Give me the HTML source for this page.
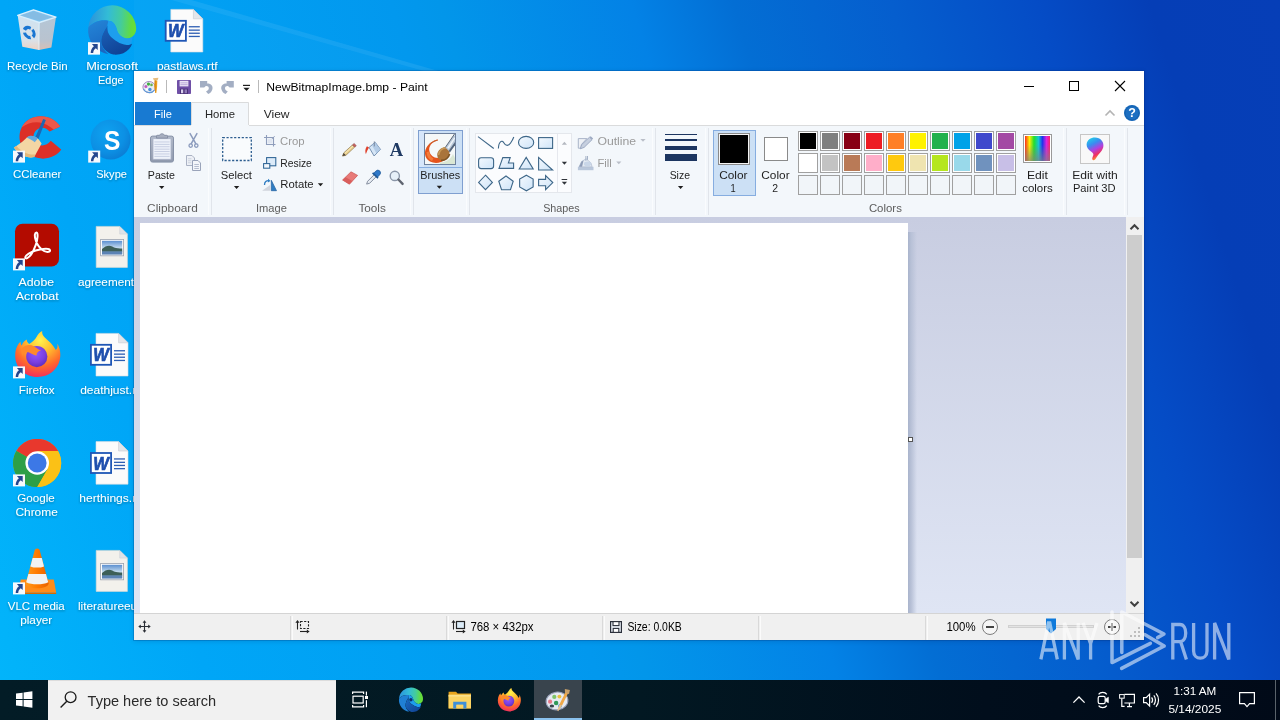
<!DOCTYPE html>
<html>
<head>
<meta charset="utf-8">
<title>Paint</title>
<style>
*{box-sizing:border-box;margin:0;padding:0}
html,body{width:1280px;height:720px;overflow:hidden}
body{font-family:"Liberation Sans",sans-serif;font-size:12px;color:#1e1e1e;position:relative;background:#0a6fd8}
.abs{position:absolute}
svg{position:absolute;left:0;top:0;overflow:visible;will-change:transform}
svg text{font-family:"Liberation Sans",sans-serif}
#desk{position:absolute;left:0;top:0;width:1280px;height:720px;
 background:
  linear-gradient(73deg,#02b5fb 0%,#02b3fa 2.1%,#00a6f7 14.7%,#01a0f3 28%,#0298ee 40.7%,#0296ea 43.9%,#0382e6 56.7%,#036ed4 63.5%,#055ece 74%,#054cc6 83.7%,#053eb6 91.3%,#063eb7 100%);}
#win{position:absolute;left:134px;top:71px;width:1010px;height:569px;background:#fff;box-shadow:0 0 0 1px rgba(0,40,110,.22),0 1px 5px rgba(0,0,60,.16);overflow:hidden}
#work{position:absolute;left:0;top:146px;width:1010px;height:396px;background:linear-gradient(#c8cde1,#dfe5f4)}
#status{position:absolute;left:0;top:542px;width:1010px;height:27px;background:#f0f0f0}
.sdiv{position:absolute;top:3px;width:3px;height:24px;border-left:1px solid #d9d9d9;border-right:1px solid #fbfbfb}
#tb{position:absolute;left:0;top:680px;width:1280px;height:40px;background:linear-gradient(90deg,#031c26 0%,#021822 50%,#010e1c 77%,#010a18 100%)}
</style>
</head>
<body>
<div id="desk"></div>
<svg id="dsk" width="1280" height="720" viewBox="0 0 1280 720">
<defs>
<linearGradient id="gSky" x1="0" y1="0" x2="0" y2="1"><stop offset="0" stop-color="#5b8fd0"/><stop offset=".55" stop-color="#c9dff0"/><stop offset="1" stop-color="#7fa0c4"/></linearGradient>
<linearGradient id="gEdge" x1="0" y1="0.5" x2="1" y2="0.55"><stop offset="0" stop-color="#2a92dc"/><stop offset=".4" stop-color="#33bcd6"/><stop offset=".68" stop-color="#44cc9c"/><stop offset=".9" stop-color="#62dc40"/><stop offset="1" stop-color="#6ade38"/></linearGradient>
<linearGradient id="gEdgeD" x1="0" y1="0" x2="0.6" y2="1"><stop offset="0" stop-color="#1c62ba"/><stop offset="1" stop-color="#0f4194"/></linearGradient>
<linearGradient id="gEdgeM" x1="0" y1="0" x2="0.3" y2="1"><stop offset="0" stop-color="#2486d8"/><stop offset="1" stop-color="#1a68c2"/></linearGradient>
<radialGradient id="gSkype" cx=".4" cy=".35" r=".75"><stop offset="0" stop-color="#0ea2f0"/><stop offset=".6" stop-color="#0c90e4"/><stop offset="1" stop-color="#0b78d0"/></radialGradient>
<radialGradient id="gFox" cx=".55" cy=".2" r=".95"><stop offset="0" stop-color="#fff44f"/><stop offset=".3" stop-color="#ffbd2e"/><stop offset=".6" stop-color="#ff6a2b"/><stop offset=".85" stop-color="#f0305c"/><stop offset="1" stop-color="#d61f7a"/></radialGradient>
<radialGradient id="gFoxP" cx=".45" cy=".35" r=".7"><stop offset="0" stop-color="#9059ff"/><stop offset=".6" stop-color="#7a3fe0"/><stop offset="1" stop-color="#5b2bb8"/></radialGradient>
<linearGradient id="gBinL" x1="0" y1="0" x2="0" y2="1"><stop offset="0" stop-color="#cfe2f0"/><stop offset=".7" stop-color="#d9e2ea"/><stop offset="1" stop-color="#ecd2c4"/></linearGradient>
<linearGradient id="gBinR" x1="0" y1="0" x2="0" y2="1"><stop offset="0" stop-color="#b4c6d6"/><stop offset=".7" stop-color="#b9c3cf"/><stop offset="1" stop-color="#d8bfb4"/></linearGradient>
<linearGradient id="gVlc" x1="0" y1="0" x2="1" y2="0"><stop offset="0" stop-color="#ff9a1a"/><stop offset=".5" stop-color="#ff7a00"/><stop offset="1" stop-color="#e86200"/></linearGradient>
<filter id="ts" x="-10%" y="-30%" width="120%" height="170%"><feDropShadow dx="0" dy="1" stdDeviation="1" flood-color="#00202c" flood-opacity=".4"/></filter>
</defs>
<path d="M150 -12L470 80L470 84L150 -6z" fill="#fff" opacity=".06"/>
<path d="M134 -4L150 -12L470 80L134 80z" fill="#fff" opacity=".025"/>
<g>
<path d="M17.7 15.4L39.3 22.5L38.9 50L22.3 46.7z" fill="url(#gBinL)"/>
<path d="M39.3 22.5L56 17.1L51.4 47.5L38.9 50z" fill="url(#gBinR)"/>
<path d="M17.7 15.4L33.5 9.8L56 17.1L39.3 22.5z" fill="#7fc4f0" stroke="#d8eefc" stroke-width="1.4" stroke-linejoin="round"/>
<path d="M21 15.6L33.6 11.6L51.6 17.2L39.2 20.8z" fill="#8ab6d8" opacity=".55"/>
<path d="M39.3 22.5L38.9 50" stroke="#eef6fb" stroke-width="1" opacity=".8"/>
<g transform="translate(29.2,32.6) skewY(16)"><circle r="4.9" fill="none" stroke="#1a76d2" stroke-width="3.2" stroke-dasharray="7.6 2.66" transform="rotate(-50)"/></g>
</g>
<g transform="translate(88.0,42.4)"><rect x="0" y="0" width="12" height="12" fill="#f6f9fd"/><path d="M3.9 1.7H9.7V7.7L7.8 5.8C6.1 7 5.2 8.6 5.2 10.6H2.7C2.7 7.8 3.9 5.4 5.9 3.8z" fill="#24468e"/></g>
<g transform="translate(88,6.4)">
<path d="M0.3 21A24 24 0 0 1 48.2 22C48.2 25 47 28 45.3 29.4C43 32 40 32.6 37 31.8C33 30.6 30.5 27.5 29.5 25.3C28.5 22 28 19.5 26 17C24 15 22 14.4 20.3 14.4C13 13 6 15 0.3 21z" fill="url(#gEdge)"/>
<path d="M0.3 21C6 15 13 13 20.3 14.4L19.5 19.4C16 24 13 30 13.25 35.3C13.5 40 16 44 20.4 47.8A24 24 0 0 1 0.3 21z" fill="url(#gEdgeM)"/>
<path d="M20.3 14.4C22 14.4 24 15 26 17C28 19.5 28.5 22 29.5 25.3C30.5 27.5 33 30.6 37 31.8C40 32.6 42.4 32.2 44.6 30.4L43.4 36.6C41.6 38.4 40 38.8 38.7 38.6C35 38 32 37 29.5 35.3C26.5 33.5 24 31.6 22.8 30.3C21 28 20.2 26.5 19.9 25.3C19.4 23 19.3 21 19.5 19.4z" fill="#1d9eee"/>
<path d="M19.5 19.4C17 23 13 29 13.25 35.3C13.6 41 18 46 25.3 48.2C29 48.6 32.5 48 35.3 46.9C40 44.5 43 41 44.1 37.35C42 38.6 40 38.9 38.7 38.6C35 38 32 37 29.5 35.3C26.5 33.5 24 31.6 22.8 30.3C21 28 20.2 26.5 19.9 25.3C19.4 23 19.3 21 19.5 19.4z" fill="url(#gEdgeD)"/>
</g>
<g transform="translate(88.0,42.4)"><rect x="0" y="0" width="12" height="12" fill="#f6f9fd"/><path d="M3.9 1.7H9.7V7.7L7.8 5.8C6.1 7 5.2 8.6 5.2 10.6H2.7C2.7 7.8 3.9 5.4 5.9 3.8z" fill="#24468e"/></g>
<g transform="translate(170.80,9.40)"><path d="M0 0H22.6L32 9.4V42.6H0z" fill="#fbfbfb" stroke="#d8dbe0" stroke-width=".6"/><path d="M22.6 0V9.4H32z" fill="#e3e6ea" stroke="#c6cad0" stroke-width=".6"/><rect x="18" y="16.7" width="11" height="1.3" fill="#2f5fb3"/><rect x="18" y="20.1" width="11" height="1.3" fill="#2f5fb3"/><rect x="18" y="23.2" width="11" height="1.3" fill="#2f5fb3"/><rect x="18" y="26.4" width="11" height="1.3" fill="#2f5fb3"/><rect x="-5.1" y="11.4" width="20.2" height="20" fill="#fff" stroke="#1f56b5" stroke-width="1.8"/><text x="5" y="28" font-size="18" font-weight="bold" font-style="italic" fill="#1f4fae" stroke="#1f4fae" stroke-width=".7" text-anchor="middle" textLength="15.5" lengthAdjust="spacingAndGlyphs">W</text></g>
<g transform="translate(96.00,333.40)"><path d="M0 0H22.6L32 9.4V42.6H0z" fill="#fbfbfb" stroke="#d8dbe0" stroke-width=".6"/><path d="M22.6 0V9.4H32z" fill="#e3e6ea" stroke="#c6cad0" stroke-width=".6"/><rect x="18" y="16.7" width="11" height="1.3" fill="#2f5fb3"/><rect x="18" y="20.1" width="11" height="1.3" fill="#2f5fb3"/><rect x="18" y="23.2" width="11" height="1.3" fill="#2f5fb3"/><rect x="18" y="26.4" width="11" height="1.3" fill="#2f5fb3"/><rect x="-5.1" y="11.4" width="20.2" height="20" fill="#fff" stroke="#1f56b5" stroke-width="1.8"/><text x="5" y="28" font-size="18" font-weight="bold" font-style="italic" fill="#1f4fae" stroke="#1f4fae" stroke-width=".7" text-anchor="middle" textLength="15.5" lengthAdjust="spacingAndGlyphs">W</text></g>
<g transform="translate(96.00,441.60)"><path d="M0 0H22.6L32 9.4V42.6H0z" fill="#fbfbfb" stroke="#d8dbe0" stroke-width=".6"/><path d="M22.6 0V9.4H32z" fill="#e3e6ea" stroke="#c6cad0" stroke-width=".6"/><rect x="18" y="16.7" width="11" height="1.3" fill="#2f5fb3"/><rect x="18" y="20.1" width="11" height="1.3" fill="#2f5fb3"/><rect x="18" y="23.2" width="11" height="1.3" fill="#2f5fb3"/><rect x="18" y="26.4" width="11" height="1.3" fill="#2f5fb3"/><rect x="-5.1" y="11.4" width="20.2" height="20" fill="#fff" stroke="#1f56b5" stroke-width="1.8"/><text x="5" y="28" font-size="18" font-weight="bold" font-style="italic" fill="#1f4fae" stroke="#1f4fae" stroke-width=".7" text-anchor="middle" textLength="15.5" lengthAdjust="spacingAndGlyphs">W</text></g>
<g transform="translate(96.20,226.40)"><path d="M0 0H23.5L31.2 7.7V41H0z" fill="#f3f1ec" stroke="#dcd9d2" stroke-width=".6"/><path d="M23.5 0V7.7H31.2z" fill="#dfe3e8" stroke="#c9cdd3" stroke-width=".5"/><rect x="4.4" y="13" width="23" height="16.4" fill="#fdfdfd" stroke="#9aa2ae" stroke-width=".8"/><rect x="5.8" y="14.4" width="20.2" height="13.6" fill="url(#gSky)"/><path d="M5.8 22.6C9 19.6 13 18.4 16 20.2C19 22 23 22.4 26 22V25.4H5.8z" fill="#3d5f58"/><rect x="5.8" y="25" width="20.2" height="3" fill="#5c83b4"/></g>
<g transform="translate(96.20,550.40)"><path d="M0 0H23.5L31.2 7.7V41H0z" fill="#f3f1ec" stroke="#dcd9d2" stroke-width=".6"/><path d="M23.5 0V7.7H31.2z" fill="#dfe3e8" stroke="#c9cdd3" stroke-width=".5"/><rect x="4.4" y="13" width="23" height="16.4" fill="#fdfdfd" stroke="#9aa2ae" stroke-width=".8"/><rect x="5.8" y="14.4" width="20.2" height="13.6" fill="url(#gSky)"/><path d="M5.8 22.6C9 19.6 13 18.4 16 20.2C19 22 23 22.4 26 22V25.4H5.8z" fill="#3d5f58"/><rect x="5.8" y="25" width="20.2" height="3" fill="#5c83b4"/></g>
<g transform="translate(13.2,115)">
<path d="M47 11.6C41 1.6 27 -1.6 16.6 4C6 9.8 3.4 24 10 33.6C16.8 43.4 31 46.6 41.4 40.6C44.4 38.8 46.6 36.6 48 34.4L37.6 25.8C33.6 31 27.4 31.8 23.2 28.2C19 24.4 19.4 17.6 24 14.4C28.2 11.6 33.2 12.6 36.4 16.6z" fill="#dc3027"/>
<path d="M47 11.6C41 1.6 27 -1.6 16.6 4C13 6 10 9 8.4 12.6C15 7.6 23 6 30 8.4C35 10 38.4 12.4 40.4 14.6z" fill="#ef5f50" opacity=".85"/>
<path d="M30 4L32.6 5L24.6 25.4L21.4 24z" fill="#1c68b4"/>
<path d="M13.6 22.6C17 20.4 22 21 25.6 24.6L28.4 28.4L21 42C15 43.6 6 40.6 0.6 32.6C4 30.6 10 26.6 13.6 22.6z" fill="#f3d6a4"/>
<path d="M13.6 22.6C16 20 21 20 24.6 23.6L21.6 27.2C19 25.2 16 24 13.6 22.6z" fill="#5fa8e0"/>
<path d="M0.6 32.6C6 40.6 15 43.6 21 42L22.4 39.4C16 40.4 8 37 3.4 31z" fill="#e4b87a"/>
</g>
<g transform="translate(13.0,150.6)"><rect x="0" y="0" width="12" height="12" fill="#f6f9fd"/><path d="M3.9 1.7H9.7V7.7L7.8 5.8C6.1 7 5.2 8.6 5.2 10.6H2.7C2.7 7.8 3.9 5.4 5.9 3.8z" fill="#24468e"/></g>
<circle cx="110.6" cy="139.6" r="20" fill="url(#gSkype)"/>
<text x="112.2" y="149.6" font-size="28.5" font-weight="bold" fill="#fff" text-anchor="middle" textLength="16.4" lengthAdjust="spacingAndGlyphs">S</text>
<g transform="translate(88.2,150.6)"><rect x="0" y="0" width="12" height="12" fill="#f6f9fd"/><path d="M3.9 1.7H9.7V7.7L7.8 5.8C6.1 7 5.2 8.6 5.2 10.6H2.7C2.7 7.8 3.9 5.4 5.9 3.8z" fill="#24468e"/></g>
<rect x="15" y="223.8" width="44" height="42.6" rx="7.5" fill="#b30b00"/>
<g fill="none" stroke="#fff" stroke-width="2" stroke-linecap="round" stroke-linejoin="round" transform="translate(15,223.8)">
<path d="M21.4 8.6C19.6 8.8 19.4 12 20.6 16C21.8 20.6 25.6 25.6 29.4 27.4C32.6 28.8 35.4 28 35 26.4C34.6 24.8 30 24.6 25 25.6C19.6 26.6 14 29 11.4 31.6C9.4 33.6 10.4 35.2 12.2 34.4C15 33 18.6 27 20.6 21.6C22.6 16 23.4 8.6 21.4 8.6z"/>
</g>
<g transform="translate(13.0,258.4)"><rect x="0" y="0" width="12" height="12" fill="#f6f9fd"/><path d="M3.9 1.7H9.7V7.7L7.8 5.8C6.1 7 5.2 8.6 5.2 10.6H2.7C2.7 7.8 3.9 5.4 5.9 3.8z" fill="#24468e"/></g>
<g transform="translate(13.2,331)">
<path d="M24.4 46C11 46 1.6 36 2 24C2.2 17 5 12.6 7.4 10.4C7.2 12.4 7.8 13.6 8.6 14.4C9.6 11.6 11.4 9.6 13.6 8.6C13.6 10.6 14.4 12 16 13C19 11.4 22 8.6 23.6 5.6C25 3 26.4 1 29 0C28.6 2.4 29.6 4.6 31.6 6.6C36 10.6 40 14 42.6 19C44.6 17.6 44.6 14.6 44 12.6C47 17 48 23.6 46.4 29.6C44 39 35.6 46 24.4 46z" fill="url(#gFox)"/>
<circle cx="23.6" cy="25.6" r="10.6" fill="url(#gFoxP)"/>
<path d="M9 17C12 13.6 17 13 21 15.4C24 17.2 25.4 19 28 19.2C25 20 23 22 23.4 24.6C19 24 17 21 13.6 21.4C11 21.6 9.6 23 9 25C8 22 8.2 19 9 17z" fill="#ff8a2a"/>
</g>
<g transform="translate(13.0,366.4)"><rect x="0" y="0" width="12" height="12" fill="#f6f9fd"/><path d="M3.9 1.7H9.7V7.7L7.8 5.8C6.1 7 5.2 8.6 5.2 10.6H2.7C2.7 7.8 3.9 5.4 5.9 3.8z" fill="#24468e"/></g>
<g transform="translate(37.2,463)">
<circle r="24" fill="#fbc116"/>
<path d="M0 0L-20.78 -12A24 24 0 0 1 20.78 -12z" fill="#e8382d"/>
<path d="M-20.78 -12A24 24 0 0 1 20.78 -12L0 -12z" fill="#e8382d"/>
<path d="M0 0L-20.78 -12A24 24 0 0 0 0 24L10.4 6z" fill="#2d9f47"/>
<path d="M-20.78 -12A24 24 0 0 0 0 24L10.39 6L0 0z" fill="#2d9f47"/>
<path d="M20.78 -12H0L10.39 6L0 24A24 24 0 0 0 20.78 -12z" fill="#fbc116"/>
<circle r="11.8" fill="#fff"/><circle r="9.4" fill="#3c78e6"/>
</g>
<g transform="translate(13.0,474.4)"><rect x="0" y="0" width="12" height="12" fill="#f6f9fd"/><path d="M3.9 1.7H9.7V7.7L7.8 5.8C6.1 7 5.2 8.6 5.2 10.6H2.7C2.7 7.8 3.9 5.4 5.9 3.8z" fill="#24468e"/></g>
<g transform="translate(13.2,547)">
<path d="M7.6 32.6H40.6L43 45.8H5.2z" fill="#ff8c1a"/><path d="M5.2 45.8H43V47H5.2z" fill="#d96a00"/>
<path d="M24 1.4C25.4 1.4 26.2 2.2 26.6 3.4L35.4 36.2C35.4 39.6 30 41.2 24 41.2C18 41.2 12.6 39.6 12.6 36.2L21.4 3.4C21.8 2.2 22.6 1.4 24 1.4z" fill="url(#gVlc)"/>
<path d="M19.4 11L28.6 11L30.8 19.4C27 21 21 21 17.2 19.4z" fill="#f2f2f2"/>
<path d="M15.2 27L32.8 27L35 35.2C30 38 18 38 13 35.2z" fill="#f2f2f2"/>
</g>
<g transform="translate(13.0,582.4)"><rect x="0" y="0" width="12" height="12" fill="#f6f9fd"/><path d="M3.9 1.7H9.7V7.7L7.8 5.8C6.1 7 5.2 8.6 5.2 10.6H2.7C2.7 7.8 3.9 5.4 5.9 3.8z" fill="#24468e"/></g>
<g filter="url(#ts)">
<text x="7.00" y="69.50" font-size="11" fill="#fff" textLength="60.60" lengthAdjust="spacingAndGlyphs" >Recycle Bin</text>
<text x="86.20" y="69.50" font-size="11" fill="#fff" textLength="51.90" lengthAdjust="spacingAndGlyphs" >Microsoft</text>
<text x="98.00" y="84.30" font-size="11" fill="#fff" textLength="25.60" lengthAdjust="spacingAndGlyphs" >Edge</text>
<text x="156.90" y="69.50" font-size="11" fill="#fff" textLength="60.70" lengthAdjust="spacingAndGlyphs" >pastlaws.rtf</text>
<text x="13.00" y="177.60" font-size="11" fill="#fff" textLength="48.30" lengthAdjust="spacingAndGlyphs" >CCleaner</text>
<text x="96.20" y="177.60" font-size="11" fill="#fff" textLength="30.80" lengthAdjust="spacingAndGlyphs" >Skype</text>
<text x="18.60" y="285.60" font-size="11" fill="#fff" textLength="35.50" lengthAdjust="spacingAndGlyphs" >Adobe</text>
<text x="15.80" y="300.40" font-size="11" fill="#fff" textLength="42.80" lengthAdjust="spacingAndGlyphs" >Acrobat</text>
<text x="77.90" y="285.60" font-size="11" fill="#fff" textLength="56.10" lengthAdjust="spacingAndGlyphs" >agreement</text>
<text x="18.80" y="393.60" font-size="11" fill="#fff" textLength="35.70" lengthAdjust="spacingAndGlyphs" >Firefox</text>
<text x="80.20" y="393.60" font-size="11" fill="#fff" textLength="56.00" lengthAdjust="spacingAndGlyphs" >deathjust.r</text>
<text x="17.20" y="501.60" font-size="11" fill="#fff" textLength="37.60" lengthAdjust="spacingAndGlyphs" >Google</text>
<text x="15.40" y="516.40" font-size="11" fill="#fff" textLength="42.40" lengthAdjust="spacingAndGlyphs" >Chrome</text>
<text x="79.30" y="501.60" font-size="11" fill="#fff" textLength="56.90" lengthAdjust="spacingAndGlyphs" >herthings.r</text>
<text x="7.70" y="609.60" font-size="11" fill="#fff" textLength="57.10" lengthAdjust="spacingAndGlyphs" >VLC media</text>
<text x="20.20" y="624.40" font-size="11" fill="#fff" textLength="32.10" lengthAdjust="spacingAndGlyphs" >player</text>
<text x="77.90" y="609.60" font-size="11" fill="#fff" textLength="59.30" lengthAdjust="spacingAndGlyphs" >literatureeu</text>
</g>
</svg><div id="win">
 <div id="work">
  <div class="abs" style="left:774px;top:15px;width:9px;height:381px;background:linear-gradient(90deg,#a9b4cc 0%,#b8c1d7 35%,rgba(196,203,222,0) 100%)"></div>
  <div class="abs" style="left:6px;top:6px;width:768px;height:432px;background:#fff"></div>
  <div class="abs" style="left:774px;top:220px;width:5px;height:5px;background:#fff;border:1px solid #555"></div>
  <div class="abs" style="left:992px;top:0;width:18px;height:396px;background:#f0f0f0"></div>
  <div class="abs" style="left:993px;top:18px;width:15px;height:323px;background:#cdcdcd"></div>
  <svg style="left:992px;top:0" width="18" height="18" viewBox="0 0 18 18"><path d="M4.5 12.2 L8.5 8.2 L12.5 12.2" fill="none" stroke="#404040" stroke-width="2"/></svg>
  <svg style="left:992px;top:378px" width="18" height="18" viewBox="0 0 18 18"><path d="M4.5 6.8 L8.5 10.8 L12.5 6.8" fill="none" stroke="#404040" stroke-width="2"/></svg>
 </div>
 <div id="status">
  <div class="abs" style="left:0;top:0;width:1010px;height:1px;background:#d4d4d4"></div>
  <div class="sdiv" style="left:156px"></div>
  <div class="sdiv" style="left:312px"></div>
  <div class="sdiv" style="left:468px"></div>
  <div class="sdiv" style="left:624px"></div>
  <div class="sdiv" style="left:791px"></div>
  <svg style="left:4px;top:7px" width="13" height="13" viewBox="0 0 13 13"><path d="M6.5 1.5V11.5M1.5 6.5H11.5" stroke="#2b2f36" stroke-width="1.1" fill="none"/><path d="M6.5 0.3L8.4 2.8H4.6zM6.5 12.7L8.4 10.2H4.6zM0.3 6.5L2.8 4.6V8.4zM12.7 6.5L10.2 4.6V8.4z" fill="#2b2f36"/></svg>
  <svg style="left:160px;top:6px" width="18" height="16" viewBox="0 0 18 16"><path d="M3.5 2.5V10.5" stroke="#222" stroke-width="1.1"/><path d="M3.5 1L5.6 3.8H1.4z" fill="#222"/><rect x="6.5" y="2.5" width="8" height="7" fill="none" stroke="#222" stroke-width="1.1" stroke-dasharray="2.2 1.4"/><path d="M6 12.5H14" stroke="#222" stroke-width="1.1"/><path d="M15.6 12.5L12.8 10.4V14.6z" fill="#222"/></svg>
  <svg style="left:316px;top:6px" width="18" height="16" viewBox="0 0 18 16"><path d="M3.5 2.5V10.5" stroke="#222" stroke-width="1.1"/><path d="M3.5 1L5.6 3.8H1.4z" fill="#222"/><rect x="6.5" y="2.5" width="8" height="7" fill="#dcecf8" stroke="#222" stroke-width="1.2"/><path d="M6 12.5H14" stroke="#222" stroke-width="1.1"/><path d="M15.6 12.5L12.8 10.4V14.6z" fill="#222"/></svg>
  <svg style="left:476px;top:8px" width="12" height="12" viewBox="0 0 12 12"><rect x="0.6" y="0.6" width="10.8" height="10.8" fill="#eef3fa" stroke="#2a2f3a" stroke-width="1.2"/><rect x="3" y="0.6" width="6" height="4" fill="#fff" stroke="#2a2f3a" stroke-width="1.1"/><rect x="3.2" y="7.4" width="5.6" height="4" fill="#fff" stroke="#2a2f3a" stroke-width="1.1"/></svg>
  <svg style="left:847px;top:5px" width="18" height="18" viewBox="0 0 18 18"><circle cx="9" cy="9" r="7.5" fill="#f6f6f6" stroke="#7c7c7c" stroke-width="1"/><path d="M5 9H13" stroke="#444" stroke-width="2"/></svg>
  <div class="abs" style="left:874px;top:12px;width:86px;height:3px;background:#e3e3e3;border:1px solid #d0d0d0"></div>
  <svg style="left:911px;top:5px" width="12" height="16" viewBox="0 0 12 16"><path d="M1 0.5H11V11L6 15.5L1 11z" fill="#0f7adb"/></svg>
  <svg style="left:969px;top:5px" width="18" height="18" viewBox="0 0 18 18"><circle cx="9" cy="9" r="7.5" fill="#f6f6f6" stroke="#7c7c7c" stroke-width="1"/><path d="M5 9H13M9 5V13" stroke="#444" stroke-width="2"/></svg>
  <svg style="left:996px;top:14px" width="12" height="12" viewBox="0 0 12 12"><g fill="#bdbdbd"><rect x="8" y="8" width="2" height="2"/><rect x="8" y="4" width="2" height="2"/><rect x="4" y="8" width="2" height="2"/><rect x="8" y="0" width="2" height="2"/><rect x="4" y="4" width="2" height="2"/><rect x="0" y="8" width="2" height="2"/></g></svg>
 </div>
</div>
<svg id="ui" width="1280" height="720" viewBox="0 0 1280 720">
<defs>
<linearGradient id="gShape" x1="0" y1="0" x2="1" y2="1"><stop offset="0" stop-color="#f4f9fe"/><stop offset="1" stop-color="#cfe4f8"/></linearGradient>
<linearGradient id="gRain" x1="0" y1="0" x2="1" y2="0"><stop offset="0" stop-color="#ff2a1a"/><stop offset=".18" stop-color="#fff200"/><stop offset=".36" stop-color="#1fe02a"/><stop offset=".54" stop-color="#10c8d8"/><stop offset=".70" stop-color="#2030f0"/><stop offset=".86" stop-color="#e020e0"/><stop offset="1" stop-color="#ff2060"/></linearGradient>
<linearGradient id="gRainV" x1="0" y1="0" x2="0" y2="1"><stop offset="0" stop-color="#808080" stop-opacity="0"/><stop offset=".35" stop-color="#808080" stop-opacity=".05"/><stop offset="1" stop-color="#808080" stop-opacity=".72"/></linearGradient>
<linearGradient id="gP3d" x1="0.2" y1="0" x2="0.6" y2="1"><stop offset="0" stop-color="#1fd0e8"/><stop offset=".3" stop-color="#3a8cf0"/><stop offset=".55" stop-color="#b040e0"/><stop offset=".78" stop-color="#f03060"/><stop offset="1" stop-color="#ffb020"/></linearGradient>
<linearGradient id="gClip" x1="0" y1="0" x2="0" y2="1"><stop offset="0" stop-color="#b2bac9"/><stop offset="1" stop-color="#8f99ad"/></linearGradient>
</defs>
<rect x="134" y="71" width="1010" height="31" fill="#fff"/>
<rect x="134" y="102" width="1010" height="24" fill="#fff"/>
<rect x="134" y="125" width="1010" height="1" fill="#dadbdc"/>
<rect x="134" y="126" width="1010" height="91" fill="#f3f7fb"/>
<rect x="135" y="102" width="56" height="23" fill="#187ad2"/>
<rect x="191" y="102" width="58" height="24" fill="#f3f7fb"/>
<path d="M191.5 125V102.5H248.5V125" fill="none" stroke="#dadbdc" stroke-width="1"/>
<rect x="211" y="128" width="1" height="87" fill="#e1e5eb"/>
<rect x="208" y="128" width="1" height="87" fill="#fafcfe"/>
<rect x="333" y="128" width="1" height="87" fill="#e1e5eb"/>
<rect x="330" y="128" width="1" height="87" fill="#fafcfe"/>
<rect x="413" y="128" width="1" height="87" fill="#e1e5eb"/>
<rect x="410" y="128" width="1" height="87" fill="#fafcfe"/>
<rect x="469" y="128" width="1" height="87" fill="#e1e5eb"/>
<rect x="466" y="128" width="1" height="87" fill="#fafcfe"/>
<rect x="655" y="128" width="1" height="87" fill="#e1e5eb"/>
<rect x="652" y="128" width="1" height="87" fill="#fafcfe"/>
<rect x="708" y="128" width="1" height="87" fill="#e1e5eb"/>
<rect x="705" y="128" width="1" height="87" fill="#fafcfe"/>
<rect x="1066" y="128" width="1" height="87" fill="#e1e5eb"/>
<rect x="1063" y="128" width="1" height="87" fill="#fafcfe"/>
<rect x="1127" y="128" width="1" height="87" fill="#e1e5eb"/>
<rect x="1124" y="128" width="1" height="87" fill="#fafcfe"/>
<path d="M1024 86.5H1034" stroke="#000" stroke-width="1"/>
<rect x="1069.5" y="81.5" width="9" height="9" fill="none" stroke="#000" stroke-width="1"/>
<path d="M1115 81L1125 91M1125 81L1115 91" stroke="#000" stroke-width="1.1"/>
<path d="M1105.5 115.5L1110 111L1114.5 115.5" fill="none" stroke="#b4b4b4" stroke-width="1.6"/>
<circle cx="1132" cy="113" r="8" fill="#1c6fc2"/>
<circle cx="1132" cy="113" r="7" fill="none" stroke="#1560ad" stroke-width="1"/>
<text x="1132" y="117.4" font-size="12.5" font-weight="bold" fill="#fff" text-anchor="middle">?</text>
<g transform="translate(142.5,77.5)">
<ellipse cx="6.6" cy="9.6" rx="6.2" ry="5.6" fill="#e8ecf4" stroke="#a58cc0" stroke-width="1"/>
<path d="M1 11.4A6.2 5.6 0 0 0 12 12.6" fill="none" stroke="#5d9bd8" stroke-width="1.1"/>
<circle cx="3.4" cy="9" r="1.5" fill="#c05cc0"/><circle cx="6" cy="6.6" r="1.6" fill="#3fae3f"/><circle cx="9" cy="7.4" r="1.3" fill="#6fb24f"/><circle cx="7.4" cy="12" r="1.7" fill="#4a8fd8"/><circle cx="4.4" cy="12" r="1.1" fill="#fff"/>
<path d="M10.4 0.8L16 0.2L15.2 2.6L13.6 3.4L11.4 2.8z" fill="#e8bc7c"/>
<path d="M12.2 3L14.8 3.2L14.6 9L13.8 15.4L12.8 15.4L12 9z" fill="#f0a020"/>
<path d="M12.2 3L13.4 3.1L13.2 15.4L12.8 15.4L12 9z" fill="#d98a10"/>
</g>
<rect x="166" y="80" width="1" height="13" fill="#b9b9b9"/>
<g transform="translate(177,80)">
<rect x="0" y="0" width="14" height="14" rx="0.8" fill="#6f4fa6"/>
<rect x="2.6" y="0.8" width="8.8" height="5.6" fill="#e9e2f4"/><rect x="3.4" y="2.4" width="7.2" height="0.9" fill="#b9a7d8"/><rect x="3.4" y="4.2" width="7.2" height="0.9" fill="#b9a7d8"/>
<rect x="3" y="8.6" width="8" height="5.4" fill="#4b3279"/><rect x="4" y="9.4" width="2.2" height="3.8" fill="#d9cfee"/><rect x="7.6" y="9.4" width="2.4" height="3.8" fill="#8f7ab8"/>
</g>
<g transform="translate(199.6,80)"><path d="M0.4 1H7.6V3.4C11.4 3.2 13.6 6 12.8 9.2C12.2 11.6 10.8 13 8.6 14L6.4 11.4C8.2 10.6 9.2 9.6 9.2 8.2C9.2 6.6 8 5.8 6.2 6L4.6 7.6H0.4z" fill="#a3aec3"/></g>
<g transform="translate(234.2,80) scale(-1,1)"><path d="M0.4 1H7.6V3.4C11.4 3.2 13.6 6 12.8 9.2C12.2 11.6 10.8 13 8.6 14L6.4 11.4C8.2 10.6 9.2 9.6 9.2 8.2C9.2 6.6 8 5.8 6.2 6L4.6 7.6H0.4z" fill="#a3aec3"/></g>
<rect x="243" y="84.8" width="7" height="1.2" fill="#1e1e1e"/>
<path d="M243.4 87.8H249.6L246.5 91z" fill="#1e1e1e"/>
<rect x="258" y="80" width="1" height="13" fill="#b9b9b9"/>
<g transform="translate(150,133.5)">
<rect x="0.5" y="2.6" width="23" height="26" rx="2" fill="url(#gClip)" stroke="#8792a8" stroke-width="1"/>
<rect x="3" y="5.2" width="18" height="20.6" fill="#eef2fa" stroke="#aab3c8" stroke-width=".8"/>
<rect x="4.4" y="8.0" width="15.2" height="0.9" fill="#c3cbe0"/>
<rect x="4.4" y="10.4" width="15.2" height="0.9" fill="#c3cbe0"/>
<rect x="4.4" y="12.8" width="15.2" height="0.9" fill="#c3cbe0"/>
<rect x="4.4" y="15.2" width="15.2" height="0.9" fill="#c3cbe0"/>
<rect x="4.4" y="17.6" width="15.2" height="0.9" fill="#c3cbe0"/>
<rect x="4.4" y="20.0" width="15.2" height="0.9" fill="#c3cbe0"/>
<rect x="4.4" y="22.4" width="15.2" height="0.9" fill="#c3cbe0"/>
<path d="M6.5 4.6V2.6Q6.5 1.8 7.4 1.8H9.6Q10 0.2 12 0.2Q14 0.2 14.4 1.8H16.6Q17.5 1.8 17.5 2.6V4.6z" fill="#a7afc0" stroke="#7f899e" stroke-width=".8"/>
</g>
<path d="M159.00 186.00H164.40L161.70 189.00z" fill="#1e1e1e"/>
<g transform="translate(188.5,133)" fill="none" stroke="#8b9bbd" stroke-width="1.5" stroke-linecap="round">
<path d="M1.6 0.6L7.4 10.8M8.4 0.6L2.6 10.8"/>
<circle cx="2.2" cy="12.6" r="1.7" stroke-width="1.3"/><circle cx="7.8" cy="12.6" r="1.7" stroke-width="1.3"/>
</g>
<g transform="translate(186,155)">
<path d="M0.5 0.5H6L8.5 3V10.5H0.5z" fill="#edf0f6" stroke="#aab2c4" stroke-width="1"/>
<path d="M6.5 5.5H12L14.5 8V15.5H6.5z" fill="#f4f6fa" stroke="#9aa4ba" stroke-width="1"/>
<rect x="8.3" y="9.0" width="4.6" height="0.9" fill="#aeb7ca"/>
<rect x="8.3" y="11.0" width="4.6" height="0.9" fill="#aeb7ca"/>
<rect x="8.3" y="13.0" width="4.6" height="0.9" fill="#aeb7ca"/>
<rect x="2" y="3.4" width="3.4" height="0.8" fill="#c3cad8"/>
<rect x="2" y="5.4" width="3.4" height="0.8" fill="#c3cad8"/>
<rect x="2" y="7.4" width="3.4" height="0.8" fill="#c3cad8"/>
</g>
<rect x="222.7" y="137.7" width="28.6" height="22.8" fill="#f9fbfd" stroke="#2c5d8f" stroke-width="1.3" stroke-dasharray="2.2 1.6"/>
<path d="M233.90 186.00H239.30L236.60 189.00z" fill="#1e1e1e"/>
<g transform="translate(264,135)" fill="none" stroke="#8e9dbb" stroke-width="1.1">
<path d="M2.5 0V9.5H11.5M0 2.5H9.5V11.5"/><path d="M4.2 7.8L10.6 1.2" stroke-width="1"/><rect x="3.6" y="3.6" width="4.8" height="4.8" fill="#dfe5f0" stroke="none"/>
</g>
<g transform="translate(263,157)">
<rect x="3.6" y="0.6" width="9.2" height="8.2" fill="#dcebf9" stroke="#2d6494" stroke-width="1.05"/>
<rect x="0.6" y="6.6" width="6.2" height="4.6" fill="#f4f8fc" stroke="#2d6494" stroke-width="1.05"/>
</g>
<g transform="translate(261.5,178.5)">
<path d="M9.8 12.2V1.8L15 12.2z" fill="#2f7dc2" stroke="#1f5f9e" stroke-width=".7"/>
<path d="M8.6 12.2V6.6L0.6 12.2z" fill="#c2c6d0" opacity=".7"/>
<path d="M3 6.4C3 3.4 5 2 7.2 2.2" fill="none" stroke="#2f7dc2" stroke-width="1.3"/><path d="M6.6 0.2L9 2.4L6.4 4z" fill="#2f7dc2"/>
</g>
<path d="M317.80 183.20H323.20L320.50 186.20z" fill="#1e1e1e"/>
<g transform="translate(341.5,142.5)">
<path d="M1 13.6L2.2 10.4L11 2.4L13.2 4.6L4.4 12.8z" fill="#ecd08a" stroke="#8f7a4a" stroke-width=".7"/>
<path d="M3 11.2L11.8 3.2" stroke="#f8ecc4" stroke-width="1"/>
<path d="M11 2.4L12.6 1L14.8 3.2L13.2 4.6z" fill="#c9605e" stroke="#8c4442" stroke-width=".6"/>
<path d="M1 13.6L2.2 10.4L4.4 12.8z" fill="#4a4038"/>
</g>
<g transform="translate(364.5,141)">
<path d="M2.4 5.2C0.6 7.6 0.4 10.6 1.4 13.2C2.4 10.4 3.2 8.4 4.6 6.6z" fill="#e0402a"/>
<path d="M4.6 6.4L10.6 1.2L16 8.4L9.6 15z" fill="#d6e6f6" stroke="#6a86a8" stroke-width=".9"/>
<path d="M10.6 1.2L16 8.4L12 12.4L7.4 4z" fill="#a9c4e2" opacity=".8"/>
<path d="M9.8 0.4V5.4" stroke="#7b8aa0" stroke-width="1"/>
</g>
<text x="396.5" y="156" font-size="18.5" font-family="Liberation Serif" font-weight="bold" fill="#1f3a63" text-anchor="middle" style="font-family:'Liberation Serif',serif">A</text>
<g transform="translate(342,171)">
<path d="M0.6 9L9 0.8L15.6 4.4L7.4 13.2z" fill="#e87a78" stroke="#c9514f" stroke-width=".7"/>
<path d="M0.6 9L3.6 6.2L10.4 10L7.4 13.2z" fill="#d95e5c"/>
</g>
<g transform="translate(366,169.5)">
<path d="M0.6 14.6L1.6 11.8L8.4 5L10.4 7L3.6 13.8z" fill="#e6ebf2" stroke="#7a8596" stroke-width=".9"/>
<path d="M7.4 4L9.8 1.6Q11.8 -0.4 13.8 1.4Q15.6 3.4 13.6 5.4L11.4 7.8z" fill="#2e78c8" stroke="#1d5896" stroke-width=".7"/>
<path d="M6.6 3.4L12 8.6" stroke="#1d5896" stroke-width="1.6"/>
</g>
<g transform="translate(389,170.3)">
<circle cx="5.8" cy="5.6" r="4.6" fill="#e6f0f8" stroke="#8a96a8" stroke-width="1.4"/>
<path d="M9.4 9.2L13.6 13.6" stroke="#5f6570" stroke-width="2.4" stroke-linecap="round"/>
</g>
<rect x="418.5" y="130.5" width="44" height="63" fill="#cce0f5" stroke="#7f9fd0" stroke-width="1"/>
<rect x="419" y="131" width="5" height="36" fill="#d6e6fa"/>
<rect x="419" y="167" width="43" height="1" fill="#86ade0"/>
<rect x="424.5" y="133.5" width="31" height="31" fill="#f5f8f8" stroke="#6f829e" stroke-width="1"/>
<clipPath id="cpB"><rect x="425" y="134" width="30" height="30"/></clipPath>
<g clip-path="url(#cpB)">
<path d="M440 162.4C446 162.6 451 158.6 453 154L455 158V164H440z" fill="#cfe0c4" opacity=".7"/>
<path d="M437.6 139.4C433 140.4 427.8 143.8 425.6 149.4C424 154 425.4 158.8 430 161.6C434.6 163.8 441 163.2 445.4 159.8L443.4 156.4C439.4 158.6 435 158.4 432.2 156C429.4 153.4 428.6 150 429.6 147C430.8 143.6 434 141.2 437.8 140.6z" fill="#e5531b"/>
<path d="M437.6 139.4C433 140.4 428.6 143.4 426.6 148C429 144.4 433 141.8 437.8 140.6z" fill="#c9602e"/>
<path d="M426.4 152C426.6 156 428.6 159.4 432 161L433.4 158.6C431 157 429.4 154.4 429.4 151.4z" fill="#f27a3a"/>
<ellipse cx="443.4" cy="153.8" rx="5.6" ry="7" transform="rotate(38 443.4 153.8)" fill="#a9743a"/>
<path d="M438.6 155C439.2 150.6 442.6 147.6 446.8 147.6" stroke="#c89a58" stroke-width="1.6" fill="none"/>
<path d="M441 160.4C445 160.6 448.6 158 449.6 154" stroke="#7d5424" stroke-width="1.6" fill="none"/>
<path d="M445.4 147.6L453.4 135.6L456 135.4V144L450 152.2z" fill="#b9c9da"/>
<path d="M447.2 147.8L454.4 137.2L455.2 138.4L448.8 148.8z" fill="#eef3f8"/>
<path d="M450 152.2L456 144V140.6L448.6 151z" fill="#56667c"/>
<path d="M445.2 147.6L454.8 133.6" stroke="#5c6878" stroke-width="1"/>
</g>
<path d="M436.70 185.80H442.10L439.40 188.80z" fill="#1e1e1e"/>
<rect x="475.5" y="133.5" width="96" height="59" fill="#fbfcfe" stroke="#e4e7ec" stroke-width="1"/>
<rect x="557" y="134" width="1" height="58" fill="#e6e8ee"/>
<path d="M478 136.6L493.8 148.5" stroke="#3d6688" stroke-width="1.1" fill="none"/>
<path d="M498.4 148.6C498.6 141.4 502 139.6 503.8 142.8C505.6 146.2 508.6 146.2 510.6 143C512.2 140.6 513.2 138.6 513.8 137" stroke="#3d6688" stroke-width="1.1" fill="none"/>
<ellipse cx="526.1" cy="142.4" rx="7.6" ry="6" stroke="#3d6688" stroke-width="1.1" fill="url(#gShape)"/>
<rect x="538.6" y="137.6" width="14" height="10.8" stroke="#3d6688" stroke-width="1.1" fill="url(#gShape)"/>
<rect x="478.6" y="157.8" width="15" height="10.8" rx="2.6" stroke="#3d6688" stroke-width="1.1" fill="url(#gShape)"/>
<path d="M499 168.4L502.8 157.6H510.2L508.4 163H513.6V168.4z" stroke="#3d6688" stroke-width="1.1" fill="url(#gShape)"/>
<path d="M519.2 169L526.2 157.4L533.2 169z" stroke="#3d6688" stroke-width="1.1" fill="url(#gShape)"/>
<path d="M538.6 157.4V170H552.6z" stroke="#3d6688" stroke-width="1.1" fill="url(#gShape)"/>
<path d="M485.5 175.2L492.4 182.4L485.5 189.6L478.6 182.4z" stroke="#3d6688" stroke-width="1.1" fill="url(#gShape)"/>
<polygon points="506.00,176.00 513.23,181.25 510.47,189.75 501.53,189.75 498.77,181.25" stroke="#3d6688" stroke-width="1.1" fill="url(#gShape)"/>
<polygon points="526.40,175.20 533.15,179.10 533.15,186.90 526.40,190.80 519.65,186.90 519.65,179.10" stroke="#3d6688" stroke-width="1.1" fill="url(#gShape)"/>
<path d="M538.6 179.4H545.6V175.6L552.8 182.6L545.6 189.6V185.8H538.6z" stroke="#3d6688" stroke-width="1.1" fill="url(#gShape)"/>
<path d="M561.80 144.70H567.00L564.40 141.70z" fill="#b4b8c0"/>
<path d="M561.80 161.80H567.00L564.40 164.80z" fill="#30343a"/>
<rect x="561.6" y="179" width="5.6" height="1" fill="#30343a"/>
<path d="M561.80 181.70H567.00L564.40 184.70z" fill="#30343a"/>
<g transform="translate(577.5,136)">
<path d="M0.8 2.6H9.4L4 8.4L3.6 12.2H0.8z" fill="#eef1f6" stroke="#a9b4c8" stroke-width="1"/>
<path d="M2.8 12.8L4 8.8L12 1.2L14.6 3.6L6.6 11.4z" fill="#c6cfdf" stroke="#97a5bf" stroke-width=".9"/>
<path d="M12 1.2L13.2 0.2L15.6 2.4L14.6 3.6z" fill="#9aa7c0"/>
</g>
<path d="M640.40 138.90H645.60L643.00 141.70z" fill="#b9bec8"/>
<g transform="translate(577.5,155.2)">
<rect x="0.4" y="11.6" width="15.6" height="3.4" fill="#b9c7db"/>
<path d="M1.6 11.6L4 6.4L8.6 3.6L13.4 7.6L14.6 11.6z" fill="#e6ecf4" stroke="#b4bfd2" stroke-width=".8"/>
<path d="M1.6 11.6L4 6.4L6 5.2L4.6 11.6z" fill="#8f9db8"/>
<path d="M8.4 0.8V5.6M10 0.8V4.6" stroke="#9ba8c0" stroke-width=".9"/>
<ellipse cx="10" cy="8.8" rx="3.6" ry="2.4" fill="#c9d6e8"/>
</g>
<path d="M616.20 161.40H621.40L618.80 164.20z" fill="#b9bec8"/>
<rect x="665" y="134" width="32" height="1" fill="#1c3560"/>
<rect x="665" y="139" width="32" height="2" fill="#1c3560"/>
<rect x="665" y="146" width="32" height="4" fill="#1c3560"/>
<rect x="665" y="154" width="32" height="7" fill="#1c3560"/>
<path d="M677.90 185.90H683.30L680.60 188.90z" fill="#1e1e1e"/>
<rect x="713.5" y="130.5" width="42" height="65" fill="#cce0f5" stroke="#86ade0" stroke-width="1"/>
<rect x="718.5" y="133.5" width="31" height="31" fill="#f4f4f4" stroke="#8a8a8a" stroke-width="1"/>
<rect x="720" y="135" width="28" height="28" fill="#000"/>
<rect x="764.5" y="137.5" width="23" height="23" fill="#fff" stroke="#8a8a8a" stroke-width="1"/>
<rect x="798.5" y="131.5" width="19" height="19" fill="#fff" stroke="#a0a0a0" stroke-width="1"/>
<rect x="800" y="133" width="16" height="16" fill="#000000"/>
<rect x="798.5" y="153.5" width="19" height="19" fill="#fff" stroke="#a0a0a0" stroke-width="1"/>
<rect x="800" y="155" width="16" height="16" fill="#ffffff"/>
<rect x="798.5" y="175.5" width="19" height="19" fill="#f1f5f9" stroke="#a0a0a0" stroke-width="1"/>
<rect x="820.5" y="131.5" width="19" height="19" fill="#fff" stroke="#a0a0a0" stroke-width="1"/>
<rect x="822" y="133" width="16" height="16" fill="#7f7f7f"/>
<rect x="820.5" y="153.5" width="19" height="19" fill="#fff" stroke="#a0a0a0" stroke-width="1"/>
<rect x="822" y="155" width="16" height="16" fill="#c3c3c3"/>
<rect x="820.5" y="175.5" width="19" height="19" fill="#f1f5f9" stroke="#a0a0a0" stroke-width="1"/>
<rect x="842.5" y="131.5" width="19" height="19" fill="#fff" stroke="#a0a0a0" stroke-width="1"/>
<rect x="844" y="133" width="16" height="16" fill="#880015"/>
<rect x="842.5" y="153.5" width="19" height="19" fill="#fff" stroke="#a0a0a0" stroke-width="1"/>
<rect x="844" y="155" width="16" height="16" fill="#b97a57"/>
<rect x="842.5" y="175.5" width="19" height="19" fill="#f1f5f9" stroke="#a0a0a0" stroke-width="1"/>
<rect x="864.5" y="131.5" width="19" height="19" fill="#fff" stroke="#a0a0a0" stroke-width="1"/>
<rect x="866" y="133" width="16" height="16" fill="#ed1c24"/>
<rect x="864.5" y="153.5" width="19" height="19" fill="#fff" stroke="#a0a0a0" stroke-width="1"/>
<rect x="866" y="155" width="16" height="16" fill="#ffaec9"/>
<rect x="864.5" y="175.5" width="19" height="19" fill="#f1f5f9" stroke="#a0a0a0" stroke-width="1"/>
<rect x="886.5" y="131.5" width="19" height="19" fill="#fff" stroke="#a0a0a0" stroke-width="1"/>
<rect x="888" y="133" width="16" height="16" fill="#ff7f27"/>
<rect x="886.5" y="153.5" width="19" height="19" fill="#fff" stroke="#a0a0a0" stroke-width="1"/>
<rect x="888" y="155" width="16" height="16" fill="#ffc90e"/>
<rect x="886.5" y="175.5" width="19" height="19" fill="#f1f5f9" stroke="#a0a0a0" stroke-width="1"/>
<rect x="908.5" y="131.5" width="19" height="19" fill="#fff" stroke="#a0a0a0" stroke-width="1"/>
<rect x="910" y="133" width="16" height="16" fill="#fff200"/>
<rect x="908.5" y="153.5" width="19" height="19" fill="#fff" stroke="#a0a0a0" stroke-width="1"/>
<rect x="910" y="155" width="16" height="16" fill="#efe4b0"/>
<rect x="908.5" y="175.5" width="19" height="19" fill="#f1f5f9" stroke="#a0a0a0" stroke-width="1"/>
<rect x="930.5" y="131.5" width="19" height="19" fill="#fff" stroke="#a0a0a0" stroke-width="1"/>
<rect x="932" y="133" width="16" height="16" fill="#22b14c"/>
<rect x="930.5" y="153.5" width="19" height="19" fill="#fff" stroke="#a0a0a0" stroke-width="1"/>
<rect x="932" y="155" width="16" height="16" fill="#b5e61d"/>
<rect x="930.5" y="175.5" width="19" height="19" fill="#f1f5f9" stroke="#a0a0a0" stroke-width="1"/>
<rect x="952.5" y="131.5" width="19" height="19" fill="#fff" stroke="#a0a0a0" stroke-width="1"/>
<rect x="954" y="133" width="16" height="16" fill="#00a2e8"/>
<rect x="952.5" y="153.5" width="19" height="19" fill="#fff" stroke="#a0a0a0" stroke-width="1"/>
<rect x="954" y="155" width="16" height="16" fill="#99d9ea"/>
<rect x="952.5" y="175.5" width="19" height="19" fill="#f1f5f9" stroke="#a0a0a0" stroke-width="1"/>
<rect x="974.5" y="131.5" width="19" height="19" fill="#fff" stroke="#a0a0a0" stroke-width="1"/>
<rect x="976" y="133" width="16" height="16" fill="#3f48cc"/>
<rect x="974.5" y="153.5" width="19" height="19" fill="#fff" stroke="#a0a0a0" stroke-width="1"/>
<rect x="976" y="155" width="16" height="16" fill="#7092be"/>
<rect x="974.5" y="175.5" width="19" height="19" fill="#f1f5f9" stroke="#a0a0a0" stroke-width="1"/>
<rect x="996.5" y="131.5" width="19" height="19" fill="#fff" stroke="#a0a0a0" stroke-width="1"/>
<rect x="998" y="133" width="16" height="16" fill="#a349a4"/>
<rect x="996.5" y="153.5" width="19" height="19" fill="#fff" stroke="#a0a0a0" stroke-width="1"/>
<rect x="998" y="155" width="16" height="16" fill="#c8bfe7"/>
<rect x="996.5" y="175.5" width="19" height="19" fill="#f1f5f9" stroke="#a0a0a0" stroke-width="1"/>
<rect x="1023.5" y="134.5" width="28" height="28" fill="#fff" stroke="#9a9a9a" stroke-width="1"/>
<rect x="1025" y="136" width="25" height="25" fill="url(#gRain)"/>
<rect x="1025" y="136" width="25" height="25" fill="url(#gRainV)"/>
<rect x="1080.5" y="134.5" width="29" height="29" fill="#f8f8f8" stroke="#c6c6c6" stroke-width="1"/>
<path d="M1095 137.6C1100.6 137.6 1103.8 141.8 1103.4 146C1103 150.6 1099.4 153 1096.6 157.2C1095.4 159 1094.6 160.4 1093.2 160.2C1091.6 159.8 1092.4 157.4 1093.2 155.6C1093.8 154 1093 153.2 1091 151.6C1088.2 149.6 1086.4 147 1086.6 144.2C1087 140.2 1090.6 137.6 1095 137.6z" fill="url(#gP3d)"/>
<text x="266.15" y="90.60" font-size="11" fill="#000" textLength="161.45" lengthAdjust="spacingAndGlyphs" >NewBitmapImage.bmp - Paint</text>
<text x="154.00" y="118.00" font-size="11" fill="#fff" textLength="17.85" lengthAdjust="spacingAndGlyphs" >File</text>
<text x="204.90" y="118.00" font-size="11" fill="#262626" textLength="30.10" lengthAdjust="spacingAndGlyphs" >Home</text>
<text x="263.65" y="118.00" font-size="11" fill="#262626" textLength="25.95" lengthAdjust="spacingAndGlyphs" >View</text>
<text x="147.80" y="178.60" font-size="11" fill="#1e1e1e" textLength="27.20" lengthAdjust="spacingAndGlyphs" >Paste</text>
<text x="147.10" y="211.90" font-size="11" fill="#5c5c5c" textLength="50.80" lengthAdjust="spacingAndGlyphs" >Clipboard</text>
<text x="220.70" y="178.60" font-size="11" fill="#1e1e1e" textLength="31.20" lengthAdjust="spacingAndGlyphs" >Select</text>
<text x="280.00" y="144.80" font-size="11" fill="#9a9a9a" textLength="24.60" lengthAdjust="spacingAndGlyphs" >Crop</text>
<text x="280.30" y="166.70" font-size="11" fill="#1e1e1e" textLength="31.55" lengthAdjust="spacingAndGlyphs" >Resize</text>
<text x="280.30" y="188.30" font-size="11" fill="#1e1e1e" textLength="33.30" lengthAdjust="spacingAndGlyphs" >Rotate</text>
<text x="255.90" y="211.90" font-size="11" fill="#5c5c5c" textLength="30.95" lengthAdjust="spacingAndGlyphs" >Image</text>
<text x="358.40" y="211.90" font-size="11" fill="#5c5c5c" textLength="27.45" lengthAdjust="spacingAndGlyphs" >Tools</text>
<text x="420.30" y="178.60" font-size="11" fill="#1e1e1e" textLength="39.90" lengthAdjust="spacingAndGlyphs" >Brushes</text>
<text x="597.40" y="144.80" font-size="11" fill="#9a9a9a" textLength="38.80" lengthAdjust="spacingAndGlyphs" >Outline</text>
<text x="597.40" y="166.70" font-size="11" fill="#9a9a9a" textLength="14.45" lengthAdjust="spacingAndGlyphs" >Fill</text>
<text x="543.15" y="211.90" font-size="11" fill="#5c5c5c" textLength="36.45" lengthAdjust="spacingAndGlyphs" >Shapes</text>
<text x="669.65" y="178.60" font-size="11" fill="#1e1e1e" textLength="20.35" lengthAdjust="spacingAndGlyphs" >Size</text>
<text x="719.15" y="178.60" font-size="11" fill="#1e1e1e" textLength="28.35" lengthAdjust="spacingAndGlyphs" >Color</text>
<text x="730.40" y="191.60" font-size="11" fill="#1e1e1e" textLength="5.20" lengthAdjust="spacingAndGlyphs" >1</text>
<text x="761.30" y="178.60" font-size="11" fill="#1e1e1e" textLength="28.30" lengthAdjust="spacingAndGlyphs" >Color</text>
<text x="772.30" y="191.60" font-size="11" fill="#1e1e1e" textLength="5.80" lengthAdjust="spacingAndGlyphs" >2</text>
<text x="868.90" y="211.90" font-size="11" fill="#5c5c5c" textLength="32.95" lengthAdjust="spacingAndGlyphs" >Colors</text>
<text x="1026.90" y="178.60" font-size="11" fill="#1e1e1e" textLength="20.95" lengthAdjust="spacingAndGlyphs" >Edit</text>
<text x="1022.15" y="191.60" font-size="11" fill="#1e1e1e" textLength="30.70" lengthAdjust="spacingAndGlyphs" >colors</text>
<text x="1072.15" y="178.60" font-size="11" fill="#1e1e1e" textLength="45.70" lengthAdjust="spacingAndGlyphs" >Edit with</text>
<text x="1072.90" y="191.60" font-size="11" fill="#1e1e1e" textLength="42.70" lengthAdjust="spacingAndGlyphs" >Paint 3D</text>
<text x="470.40" y="631.00" font-size="12" fill="#000" textLength="63.20" lengthAdjust="spacingAndGlyphs" >768 × 432px</text>
<text x="627.40" y="631.00" font-size="12" fill="#000" textLength="54.40" lengthAdjust="spacingAndGlyphs" >Size: 0.0KB</text>
<text x="946.40" y="631.00" font-size="12" fill="#000" textLength="29.20" lengthAdjust="spacingAndGlyphs" >100%</text>
</svg><div id="tb"></div>
<svg id="tbs" width="1280" height="720" viewBox="0 0 1280 720">
<defs>
<linearGradient id="gEdge2" x1="0" y1="0.5" x2="1" y2="0.55"><stop offset="0" stop-color="#2a92dc"/><stop offset=".4" stop-color="#33bcd6"/><stop offset=".68" stop-color="#44cc9c"/><stop offset=".9" stop-color="#62dc40"/><stop offset="1" stop-color="#6ade38"/></linearGradient>
<linearGradient id="gEdgeD2" x1="0" y1="0" x2="1" y2="1"><stop offset="0" stop-color="#1a6cc4"/><stop offset="1" stop-color="#103f8f"/></linearGradient>
<radialGradient id="gFox2" cx=".55" cy=".2" r=".95"><stop offset="0" stop-color="#fff44f"/><stop offset=".3" stop-color="#ffbd2e"/><stop offset=".6" stop-color="#ff6a2b"/><stop offset=".85" stop-color="#f0305c"/><stop offset="1" stop-color="#d61f7a"/></radialGradient>
<radialGradient id="gFoxP2" cx=".45" cy=".35" r=".7"><stop offset="0" stop-color="#9059ff"/><stop offset=".6" stop-color="#7a3fe0"/><stop offset="1" stop-color="#5b2bb8"/></radialGradient>
</defs>
<g fill="#fff"><path d="M16 693.6L22.6 692.7V699H16z"/><path d="M23.6 692.5L32.4 691.2V699H23.6z"/><path d="M16 700H22.6V706.3L16 705.4z"/><path d="M23.6 700H32.4V707.8L23.6 706.5z"/></g>
<rect x="48" y="680" width="288" height="40" fill="#f1f1f1"/>
<rect x="48" y="680" width="288" height="1" fill="#dcdcdc"/>
<circle cx="70.6" cy="697.2" r="5.4" fill="none" stroke="#1a1a1a" stroke-width="1.3"/>
<path d="M66.8 701.2L60.6 707.4" stroke="#1a1a1a" stroke-width="1.4"/>
<text x="87.60" y="705.80" font-size="15" fill="#2a2a2a" textLength="128.40" lengthAdjust="spacingAndGlyphs" >Type here to search</text>
<g fill="none" stroke="#fff" stroke-width="1.2">
<path d="M352.6 694V692.2H363.6V694"/><rect x="353" y="696.2" width="10.2" height="6.8"/><path d="M352.6 705V706.8H363.6V705"/>
</g>
<rect x="365.8" y="691.6" width="1.2" height="4" fill="#fff"/><rect x="365" y="696" width="3" height="3" fill="#fff"/><rect x="365.8" y="700.2" width="1.2" height="7" fill="#fff"/>
<g transform="translate(398.9,687.9) scale(0.5)">
<path d="M0.3 21A24 24 0 0 1 48.2 22C48.2 25 47 28 45.3 29.4C43 32 40 32.6 37 31.8C33 30.6 30.5 27.5 29.5 25.3C28.5 22 28 19.5 26 17C24 15 22 14.4 20.3 14.4C13 13 6 15 0.3 21z" fill="url(#gEdge2)"/>
<path d="M0.3 21C6 15 13 13 20.3 14.4L19.5 19.4C16 24 13 30 13.25 35.3C13.5 40 16 44 20.4 47.8A24 24 0 0 1 0.3 21z" fill="#2080d4"/>
<path d="M20.3 14.4C22 14.4 24 15 26 17C28 19.5 28.5 22 29.5 25.3C30.5 27.5 33 30.6 37 31.8C40 32.6 42.4 32.2 44.6 30.4L43.4 36.6C41.6 38.4 40 38.8 38.7 38.6C35 38 32 37 29.5 35.3C26.5 33.5 24 31.6 22.8 30.3C21 28 20.2 26.5 19.9 25.3C19.4 23 19.3 21 19.5 19.4z" fill="#1d9eee"/>
<path d="M19.5 19.4C17 23 13 29 13.25 35.3C13.6 41 18 46 25.3 48.2C29 48.6 32.5 48 35.3 46.9C40 44.5 43 41 44.1 37.35C42 38.6 40 38.9 38.7 38.6C35 38 32 37 29.5 35.3C26.5 33.5 24 31.6 22.8 30.3C21 28 20.2 26.5 19.9 25.3C19.4 23 19.3 21 19.5 19.4z" fill="url(#gEdgeD2)"/>
<circle cx="24" cy="23.6" r="3.4" fill="#0c2f70"/>
</g>
<g transform="translate(448.6,690.6)">
<path d="M0 1.2H7.4L9 3H22.4V17.8H0z" fill="#e8a41c"/>
<path d="M0 4.2H22.4V17.8H0z" fill="#fcd463"/>
<path d="M0 4.2H22.4V6H0z" fill="#fbe08a"/>
<path d="M4.6 17.8V11.2H17.8V17.8H14.6V14.2H7.8V17.8z" fill="#3f8fd8"/>
<rect x="7.8" y="14.2" width="6.8" height="3.6" fill="#fcd463"/>
</g>
<g transform="translate(496.8,688) scale(0.51)">
<path d="M24.4 46C11 46 1.6 36 2 24C2.2 17 5 12.6 7.4 10.4C7.2 12.4 7.8 13.6 8.6 14.4C9.6 11.6 11.4 9.6 13.6 8.6C13.6 10.6 14.4 12 16 13C19 11.4 22 8.6 23.6 5.6C25 3 26.4 1 29 0C28.6 2.4 29.6 4.6 31.6 6.6C36 10.6 40 14 42.6 19C44.6 17.6 44.6 14.6 44 12.6C47 17 48 23.6 46.4 29.6C44 39 35.6 46 24.4 46z" fill="url(#gFox2)"/>
<circle cx="23.6" cy="25.6" r="10.6" fill="url(#gFoxP2)"/>
<path d="M9 17C12 13.6 17 13 21 15.4C24 17.2 25.4 19 28 19.2C25 20 23 22 23.4 24.6C19 24 17 21 13.6 21.4C11 21.6 9.6 23 9 25C8 22 8.2 19 9 17z" fill="#ff8a2a"/>
</g>
<rect x="534" y="680" width="48" height="40" fill="#39444d"/>
<rect x="534" y="718" width="48" height="2" fill="#8ac2ee"/>
<g transform="translate(545,688.5) scale(1.5)">
<ellipse cx="8" cy="8.3" rx="7.3" ry="5.9" fill="#e6eaf2" stroke="#9aa3bd" stroke-width=".7" transform="rotate(-8 8 8.3)"/>
<circle cx="3.4" cy="8.8" r="1.4" fill="#e87a8a"/><circle cx="6.2" cy="5.6" r="1.4" fill="#7fc46a"/><circle cx="9.6" cy="5.4" r="1.3" fill="#e8c040"/><circle cx="7.4" cy="9.6" r="1.5" fill="#2f9a5a"/><circle cx="10" cy="11.6" r="1.3" fill="#5a9ad6"/><ellipse cx="4.6" cy="11.6" rx="1.5" ry="1" fill="#39444d"/>
<path d="M9.6 10.6L13.8 2.2L15.4 3L11.4 11.4z" fill="#f0a848"/><path d="M13.2 0.4L16.6 1L16 3.6L13.4 3z" fill="#c9a06a"/><path d="M9.6 10.6L11.4 11.4L8.8 15.2L8.2 14.8z" fill="#e8c088"/>
</g>
<path d="M1073.4 702.6L1079 697L1084.6 702.6" fill="none" stroke="#fff" stroke-width="1.3"/>
<g fill="none" stroke="#fff" stroke-width="1.2">
<rect x="1098.2" y="696.4" width="7" height="7.2" rx="1.6"/><path d="M1105.4 699L1108.4 697.2V702.8L1105.4 701z" fill="#fff" stroke-width=".6"/>
<path d="M1098.6 694.4C1100.4 691.8 1105 691.8 1106.8 694.4"/><path d="M1098.6 705.6C1100.4 708.2 1105 708.2 1106.8 705.6"/>
</g>
<g fill="none" stroke="#fff" stroke-width="1.2">
<path d="M1124.4 694.4H1134.4V703H1124.4"/><path d="M1127 706.6H1132M1129.4 703V706.6"/>
<rect x="1119.6" y="694.6" width="4.6" height="3.6" stroke-width="1"/><path d="M1121.8 698.4V706.4H1124.6"/>
</g>
<g fill="none" stroke="#fff" stroke-width="1.2">
<path d="M1143.6 697.6H1146.2L1149.6 694.2V706L1146.2 702.6H1143.6z"/>
<path d="M1151.6 697.4C1152.8 699 1152.8 701.2 1151.6 702.8"/><path d="M1153.8 695.4C1156 698 1156 702.2 1153.8 704.8"/><path d="M1156 693.4C1159.4 697 1159.4 703.2 1156 706.8"/>
</g>
<text x="1173.40" y="695.00" font-size="11.6" fill="#fff" textLength="42.90" lengthAdjust="spacingAndGlyphs" >1:31 AM</text>
<text x="1168.40" y="713.30" font-size="11.6" fill="#fff" textLength="52.90" lengthAdjust="spacingAndGlyphs" >5/14/2025</text>
<path d="M1239.6 692.6H1254.4V703.6H1249.6L1247 706.6L1244.4 703.6H1239.6z" fill="none" stroke="#fff" stroke-width="1.2"/>
<rect x="1275" y="680" width="1" height="40" fill="#5a636b"/>
</svg><svg id="wm" width="1280" height="720" viewBox="0 0 1280 720">
<g fill="none" stroke="#fff" stroke-opacity=".55" stroke-width="3.3" stroke-linejoin="miter" stroke-miterlimit="3">
<path d="M1040.9 659.4L1048.4 622.9H1049.8L1057.3 659.4M1043.6 650H1054.6"/>
<path d="M1064.4 659.4V622.9L1078.2 659.4V622.9"/>
<path d="M1083 622.9L1090.6 643.6L1097 622.9M1090.6 643.6V659.4"/>
<path d="M1172.8 659.4V624.5H1180C1187.6 624.5 1187.6 641.6 1180 641.6H1172.8M1180.6 641.6L1186.4 659.4"/>
<path d="M1193.6 622.9V651C1193.6 660.6 1207 660.6 1207 651V622.9"/>
<path d="M1214.6 659.4V622.9L1228.8 659.4V622.9"/>
</g>
<g fill="none" stroke="#fff" stroke-opacity=".55" stroke-width="3.5" stroke-linejoin="round" stroke-linecap="round">
<path d="M1112 612V662.6L1150.4 643.4"/>
<path d="M1121.8 652.6V612L1164 634L1157.6 637.6"/>
<path d="M1144.6 634.6L1164.2 646L1121.6 668.4"/>
</g>
</svg>
</body>
</html>
